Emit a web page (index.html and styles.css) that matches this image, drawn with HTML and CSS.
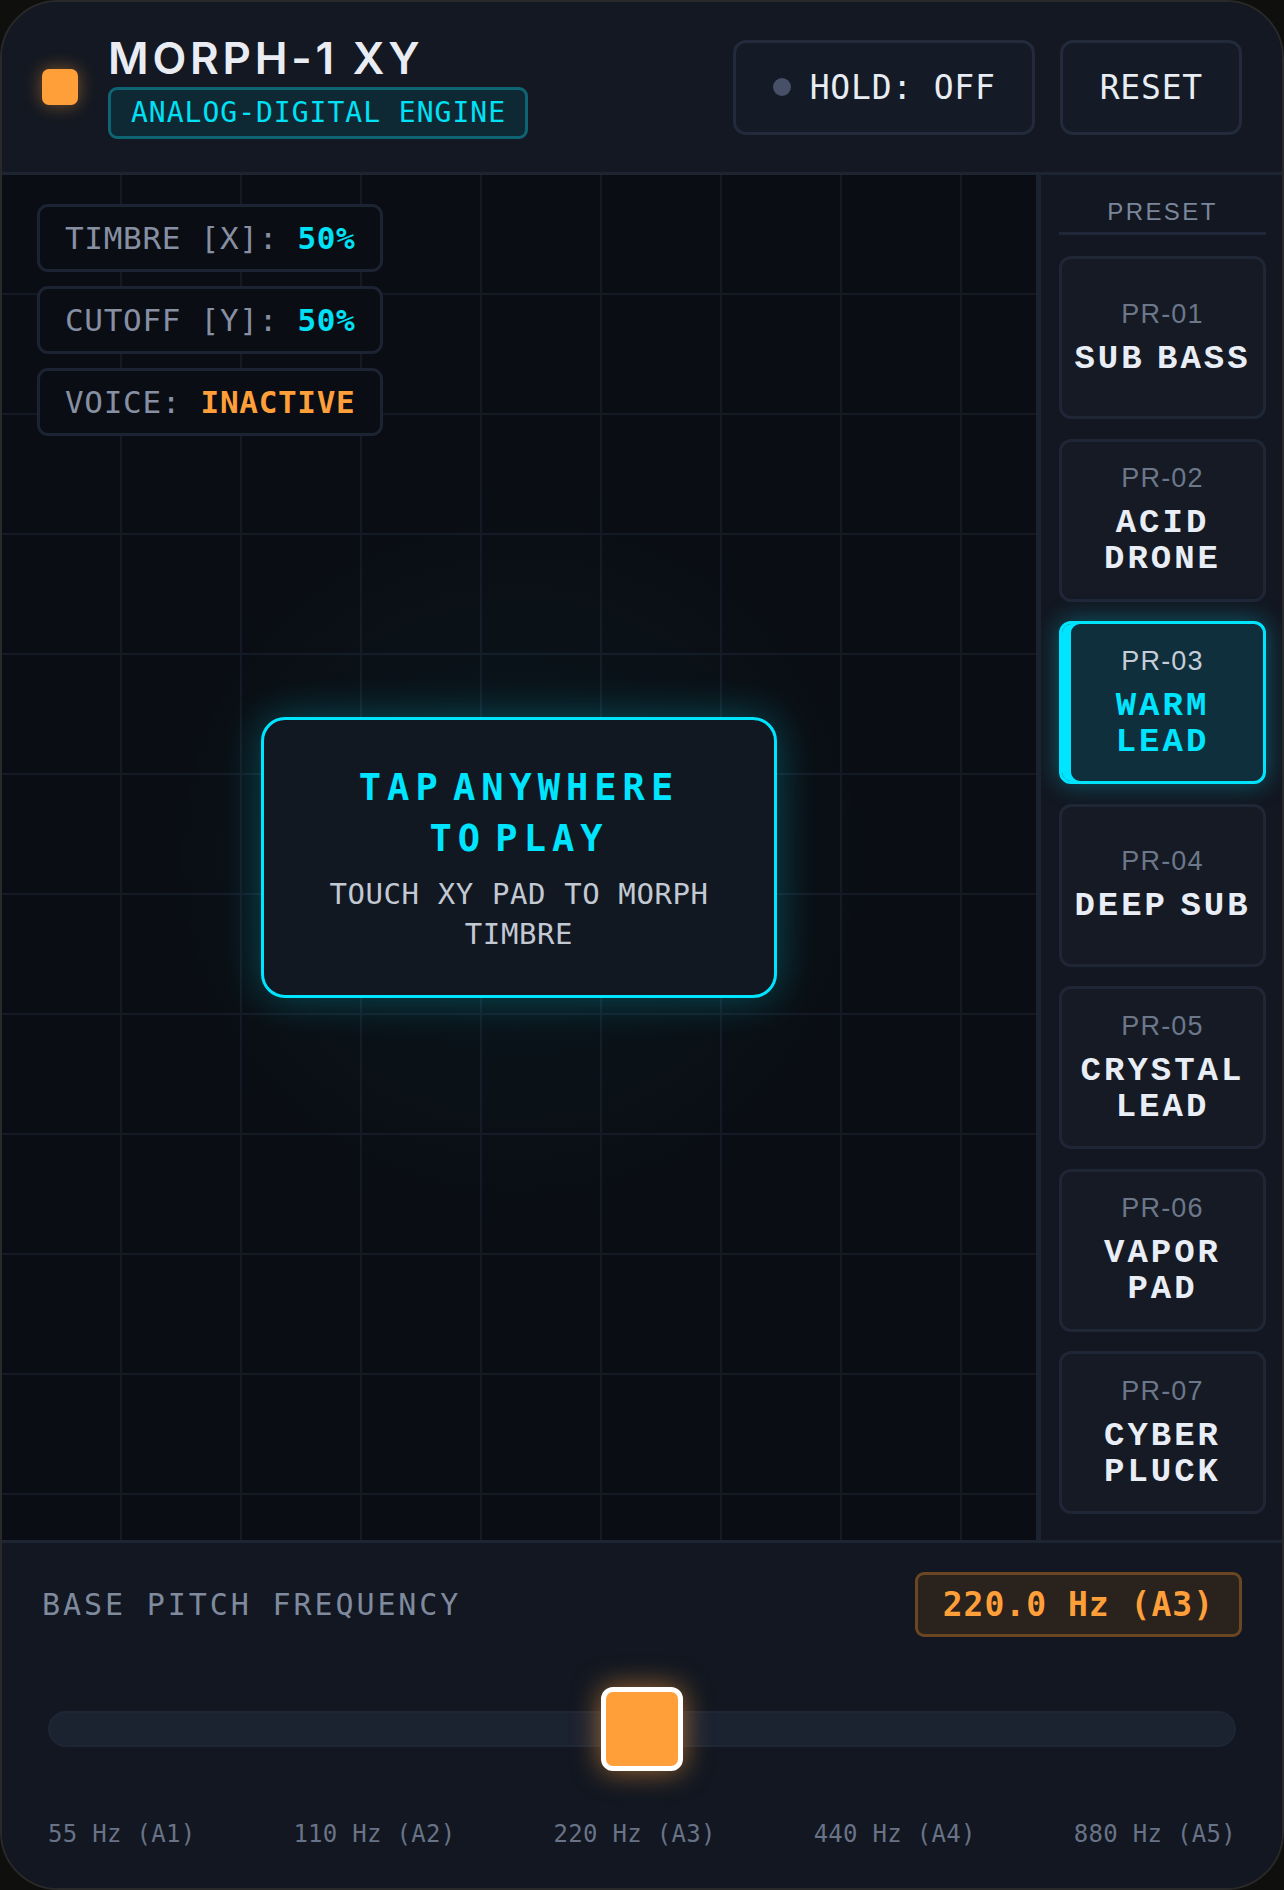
FILE: index.html
```html
<!DOCTYPE html>
<html lang="en">

<head>
  <meta charset="UTF-8">
  <meta name="viewport" content="width=device-width, initial-scale=1.0">
  <title>MORPH-1 XY</title>
  <link rel="stylesheet" href="styles.css">
</head>

<body>

  <div class="app">

    <!-- Header -->
    <header class="top-bar">
      <div class="brand">
        <div class="power-led"></div>
        <div class="brand-text">
          <h1>MORPH-1 XY</h1>
          <span class="engine-tag">ANALOG-DIGITAL ENGINE</span>
        </div>
      </div>
      <div class="top-actions">
        <button class="top-btn hold-btn"><span class="hold-dot"></span>HOLD: OFF</button>
        <button class="top-btn">RESET</button>
      </div>
    </header>

    <!-- Pad + presets -->
    <main class="workspace">
      <section class="xy-pad">
        <div class="readouts">
          <div class="readout">TIMBRE [X]: <b class="val-cyan">50%</b></div>
          <div class="readout">CUTOFF [Y]: <b class="val-cyan">50%</b></div>
          <div class="readout">VOICE: <b class="val-orange">INACTIVE</b></div>
        </div>

        <div class="tap-hint">
          <h2>TAP ANYWHERE<br>TO PLAY</h2>
          <p>TOUCH XY PAD TO MORPH<br>TIMBRE</p>
        </div>
      </section>

      <aside class="presets">
        <div class="presets-title">PRESET</div>
        <div class="preset-list">
          <div class="preset">
            <span class="pr-code">PR-01</span>
            <span class="pr-name">SUB BASS</span>
          </div>
          <div class="preset">
            <span class="pr-code">PR-02</span>
            <span class="pr-name">ACID DRONE</span>
          </div>
          <div class="preset active">
            <span class="pr-code">PR-03</span>
            <span class="pr-name">WARM LEAD</span>
          </div>
          <div class="preset">
            <span class="pr-code">PR-04</span>
            <span class="pr-name">DEEP SUB</span>
          </div>
          <div class="preset">
            <span class="pr-code">PR-05</span>
            <span class="pr-name">CRYSTAL LEAD</span>
          </div>
          <div class="preset">
            <span class="pr-code">PR-06</span>
            <span class="pr-name">VAPOR PAD</span>
          </div>
          <div class="preset">
            <span class="pr-code">PR-07</span>
            <span class="pr-name">CYBER PLUCK</span>
          </div>
        </div>
      </aside>
    </main>

    <!-- Base pitch slider -->
    <footer class="pitch">
      <div class="pitch-head">
        <span class="pitch-label">BASE PITCH FREQUENCY</span>
        <span class="pitch-value">220.0 Hz (A3)</span>
      </div>
      <div class="slider">
        <div class="slider-track"></div>
        <div class="slider-thumb" style="left: 50%;"></div>
      </div>
      <div class="ticks">
        <span>55 Hz (A1)</span>
        <span>110 Hz (A2)</span>
        <span>220 Hz (A3)</span>
        <span>440 Hz (A4)</span>
        <span>880 Hz (A5)</span>
      </div>
    </footer>

  </div>

</body>

</html>
```

FILE: styles.css
```css
/* Reset */
* {
  margin: 0;
  padding: 0;
  box-sizing: border-box;
}

body {
  font-family: "DejaVu Sans Mono", monospace;
  background-color: #0f0f0e;
  color: #e8ecf2;
}

.app {
  width: 1284px;
  height: 1890px;
  display: flex;
  flex-direction: column;
  background-color: #121721;
  border: 2px solid #29292a;
  border-radius: 58px;
  overflow: hidden;
}

/* Header */
.top-bar {
  height: 173px;
  flex-shrink: 0;
  display: flex;
  align-items: center;
  justify-content: space-between;
  padding: 0 40px;
  background-color: #131822;
  border-bottom: 3px solid #1d2432;
}

.brand {
  display: flex;
  align-items: center;
  gap: 30px;
}

.power-led {
  width: 36px;
  height: 36px;
  border-radius: 7px;
  background-color: #ff9f3a;
  box-shadow: 0 0 18px rgba(255, 159, 58, 0.45);
}

.brand-text {
  display: flex;
  flex-direction: column;
  align-items: flex-start;
}

.brand-text h1 {
  font-family: Inter, "Liberation Sans", sans-serif;
  font-size: 44px;
  line-height: 44px;
  font-weight: 600;
  letter-spacing: 3.8px;
  color: #e9edf3;
}

.engine-tag {
  margin-top: 7px;
  padding: 6px 19px 6px 20px;
  font-size: 28px;
  line-height: 34px;
  letter-spacing: 1px;
  color: #00e1f5;
  background-color: #0f2934;
  border: 3px solid #0e6473;
  border-radius: 9px;
}

.top-actions {
  display: flex;
  gap: 25px;
}

.top-btn {
  height: 95px;
  padding: 0 36px 0 37px;
  display: flex;
  align-items: center;
  gap: 19px;
  font-family: "DejaVu Sans Mono", monospace;
  font-size: 33px;
  letter-spacing: 0.8px;
  color: #e8edf3;
  background-color: #151b26;
  border: 3px solid #222a3b;
  border-radius: 13px;
  cursor: pointer;
}

.hold-dot {
  width: 18px;
  height: 18px;
  border-radius: 50%;
  background-color: #465066;
}

/* Workspace */
.workspace {
  flex: 1;
  min-height: 0;
  display: flex;
}

.xy-pad {
  flex: 1;
  position: relative;
  display: flex;
  align-items: center;
  justify-content: center;
  background-color: #0a0d13;
  background-image:
    radial-gradient(circle at 50% 50%, rgba(0, 229, 255, 0.05), rgba(0, 0, 0, 0) 45%),
    linear-gradient(90deg, rgba(0, 0, 0, 0) 118px, #141924 118px),
    linear-gradient(180deg, rgba(0, 0, 0, 0) 118px, #141924 118px);
  background-size: 100% 100%, 120px 120px, 120px 120px;
}

.readouts {
  position: absolute;
  top: 29px;
  left: 35px;
  display: flex;
  flex-direction: column;
  align-items: flex-start;
  gap: 14px;
}

.readout {
  padding: 12px 25px;
  font-size: 31px;
  line-height: 38px;
  letter-spacing: 0.7px;
  color: #8790a3;
  background-color: #0a0d14;
  border: 3px solid #1c2332;
  border-radius: 11px;
  white-space: pre;
}

.val-cyan {
  color: #00e1f5;
}

.val-orange {
  color: #ff9f3a;
}

.tap-hint {
  width: 516px;
  padding: 42px 20px 41px;
  text-align: center;
  background-color: #111822;
  border: 3px solid #00e5ff;
  border-radius: 24px;
  box-shadow: 0 0 40px rgba(0, 229, 255, 0.28);
}

.tap-hint h2 {
  font-size: 37px;
  line-height: 51px;
  font-weight: bold;
  letter-spacing: 6px;
  word-spacing: -19px;
  color: #00e5ff;
}

.tap-hint p {
  margin-top: 10px;
  font-size: 29px;
  line-height: 40px;
  letter-spacing: 0.6px;
  color: #c3c9d3;
}

/* Presets column */
.presets {
  width: 246px;
  flex-shrink: 0;
  padding: 22px 16px 0 18px;
  background-color: #121721;
  border-left: 5px solid #1b2230;
  overflow: hidden;
}

.presets-title {
  padding-bottom: 5px;
  font-family: "Liberation Sans", Arial, sans-serif;
  font-size: 24px;
  line-height: 30px;
  letter-spacing: 2.4px;
  text-align: center;
  color: #7b869a;
  border-bottom: 3px solid #1f2738;
}

.preset-list {
  margin-top: 21px;
  display: flex;
  flex-direction: column;
  gap: 19.5px;
}

.preset {
  height: 163px;
  padding: 0 8px;
  display: flex;
  flex-direction: column;
  align-items: center;
  justify-content: center;
  text-align: center;
  background-color: #151a24;
  border: 3px solid #1f2636;
  border-radius: 12px;
  cursor: pointer;
}

.pr-code {
  margin-bottom: 12px;
  font-family: "Liberation Sans", Arial, sans-serif;
  font-size: 27px;
  line-height: 30px;
  letter-spacing: 1.2px;
  color: #6c778a;
}

.pr-name {
  font-family: "Liberation Mono", monospace;
  font-size: 34px;
  line-height: 36px;
  font-weight: bold;
  letter-spacing: 3px;
  word-spacing: -11px;
  color: #e9eef6;
}

.preset.active {
  background-color: #0f2f3c;
  border-color: #00e5ff;
  box-shadow: inset 9px 0 0 #00e5ff, 0 0 24px rgba(0, 229, 255, 0.35);
}

.preset.active .pr-code {
  color: #c5cdd8;
}

.preset.active .pr-name {
  color: #00e5ff;
}

/* Pitch slider */
.pitch {
  height: 348px;
  flex-shrink: 0;
  padding: 29px 40px 0;
  background-color: #121721;
  border-top: 3px solid #1d2432;
}

.pitch-head {
  display: flex;
  align-items: center;
  justify-content: space-between;
}

.pitch-label {
  font-size: 30px;
  letter-spacing: 2.9px;
  color: #7f8a9e;
}

.pitch-value {
  padding: 11px 25px;
  font-size: 33px;
  line-height: 37px;
  font-weight: bold;
  letter-spacing: 1px;
  color: #ff9f3a;
  background-color: #29221d;
  border: 3px solid #6a4622;
  border-radius: 9px;
}

.slider {
  position: relative;
  height: 84px;
  margin-top: 50px;
  padding: 0 6px;
  display: flex;
  align-items: center;
}

.slider-track {
  flex: 1;
  height: 36px;
  background-color: #1b2230;
  border: 2px solid #1e2636;
  border-radius: 18px;
}

.slider-thumb {
  position: absolute;
  top: 0;
  width: 82px;
  height: 84px;
  transform: translateX(-50%);
  background-color: #ff9f3a;
  border: 5px solid #ffffff;
  border-radius: 12px;
  box-shadow: 0 0 28px rgba(255, 159, 58, 0.6);
}

.ticks {
  margin-top: 48px;
  padding: 0 6px;
  display: flex;
  justify-content: space-between;
  font-size: 24px;
  line-height: 30px;
  letter-spacing: 0.3px;
  color: #687387;
}
```
